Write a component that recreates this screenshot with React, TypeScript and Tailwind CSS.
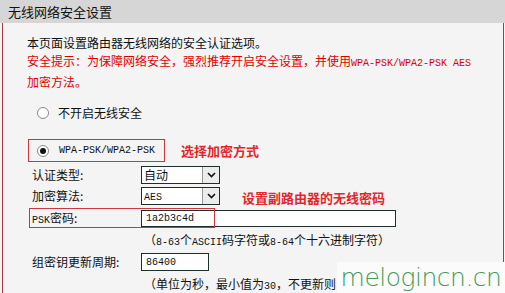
import React from 'react';

const cjk = { fontFamily: '"Noto Sans CJK SC", "Liberation Sans", sans-serif' };
const mono = { fontFamily: '"Liberation Mono", "DejaVu Sans Mono", monospace' };

function M({ children }: { children: React.ReactNode }) {
  return (
    <span style={mono} className="text-[10px]">
      {children}
    </span>
  );
}

function Radio({ checked }: { checked?: boolean }) {
  return (
    <span className="flex h-[12px] w-[12px] items-center justify-center rounded-full border border-[#8a8a8a] bg-white">
      {checked && <span className="h-[6px] w-[6px] rounded-full bg-[#111]" />}
    </span>
  );
}

function Select({ value, latin }: { value: string; latin?: boolean }) {
  return (
    <div className="flex h-[18px] w-[79px] items-center border border-[#1d2e2e] bg-white">
      <span className="flex-1 pl-[2px] leading-none">{latin ? <M>{value}</M> : value}</span>
      <span className="flex h-full w-[17px] items-center justify-center border-l border-[#9a9a9a] bg-[#ececec]">
        <svg width="9" height="6" viewBox="0 0 9 6">
          <path d="M1 1l3.5 3.5L8 1" fill="none" stroke="#111" strokeWidth="1.6" />
        </svg>
      </span>
    </div>
  );
}

export default function App() {
  return (
    <div style={cjk} className="relative h-[293px] w-[505px] overflow-hidden bg-[#f4f4f4] text-[12px] text-[#111]">
      <div className="flex h-[23px] items-center bg-[#d6d6d6] pl-[8px] text-[13px] text-[#111]">无线网络安全设置</div>

      <div className="ml-[2px] mr-[1px] h-[270px] border-x border-[#a43a44] bg-[#f4f4f4] pl-[24px] pt-[11px]">
        <div className="leading-[18px]">本页面设置路由器无线网络的安全认证选项。</div>
        <div className="leading-[18px] text-[#e00000]">
          安全提示：为保障网络安全，强烈推荐开启安全设置，并使用<M>WPA-PSK/WPA2-PSK AES</M>
        </div>
        <div className="leading-[18px] text-[#e00000]">加密方法。</div>

        <div className="mt-[13px] flex h-[18px] items-center gap-[9px] pl-[10px]">
          <Radio />
          <span>不开启无线安全</span>
        </div>

        <div className="mt-[17px] flex items-center">
          <div className="ml-[1px] flex h-[23px] w-[137px] items-center gap-[10px] border border-[#d0343c] pl-[8px]">
            <Radio checked />
            <M>WPA-PSK/WPA2-PSK</M>
          </div>
          <span className="ml-[16px] text-[13px] font-bold text-[#e3262c]">选择加密方式</span>
        </div>

        <div className="mt-[2px] flex h-[21px] items-center">
          <span className="w-[114px] pl-[5px]">认证类型:</span>
          <Select value="自动" />
        </div>
        <div className="flex h-[21px] items-center">
          <span className="w-[114px] pl-[5px]">加密算法:</span>
          <Select value="AES" latin />
          <span className="ml-[22px] mt-[4px] text-[13px] font-bold text-[#e3262c]">设置副路由器的无线密码</span>
        </div>

        <div className="relative mt-[2px] flex h-[20px] items-center">
          <span className="w-[114px] shrink-0 pl-[5px]">
            <M>PSK</M>密码:
          </span>
          <span className="flex h-[17px] w-[255px] shrink-0 items-center border border-[#1d2e2e] bg-white pl-[4px]">
            <M>1a2b3c4d</M>
          </span>
          <span className="pointer-events-none absolute left-[2px] top-0 h-[20px] w-[186px] border border-[#d0343c]" />
        </div>

        <div className="mt-[3px] h-[18px] pl-[117px] leading-[18px]">
          （<M>8-63</M>个<M>ASCII</M>码字符或<M>8-64</M>个十六进制字符）
        </div>

        <div className="mt-[3px] flex h-[20px] items-center">
          <span className="w-[114px] pl-[5px]">组密钥更新周期:</span>
          <span className="flex h-[18px] w-[68px] items-center border border-[#1d2e2e] bg-white pl-[4px]">
            <M>86400</M>
          </span>
        </div>

        <div className="mt-[3px] h-[18px] pl-[117px] leading-[18px]">
          （单位为秒，最小值为<M>30</M>，不更新则
        </div>
      </div>

      <div className="absolute bottom-0 right-0 flex h-[31px] w-[168px] items-center justify-center bg-[#fbfbfb]">
        <span
          style={{ fontFamily: '"DejaVu Sans", "Noto Sans", sans-serif' }}
          className="text-[25px] font-light leading-none tracking-[-0.5px] text-[#3f9c55]"
        >
          melogincn.cn
        </span>
      </div>
    </div>
  );
}
